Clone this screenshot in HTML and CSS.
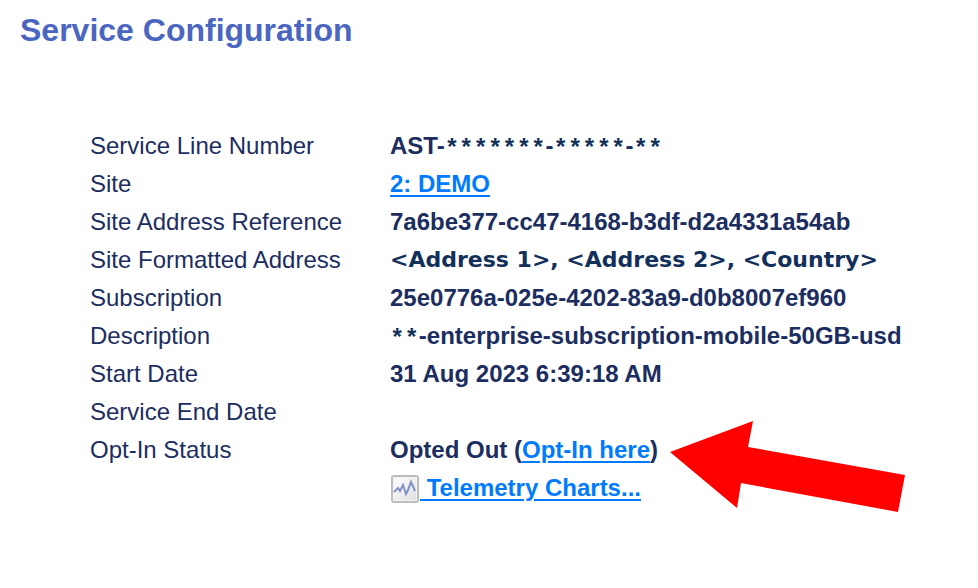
FILE: index.html
```html
<!DOCTYPE html>
<html lang="en">
  <head>
    <meta charset="utf-8" />
    <meta name="viewport" content="width=device-width, initial-scale=1" />
    <link rel="stylesheet" href="styles.css">
    <title>Service Configuration</title>
  </head>
  <body>
    <main class="page">
      <h1 class="page-title">Service Configuration</h1>
      <dl class="details">
        <dt>Service Line Number</dt>
        <dd>AST-<span class="masked">*******</span>-<span class="masked">*****</span>-<span class="masked">**</span></dd>
        <dt>Site</dt>
        <dd><a href="#">2: DEMO</a></dd>
        <dt>Site Address Reference</dt>
        <dd>7a6be377-cc47-4168-b3df-d2a4331a54ab</dd>
        <dt>Site Formatted Address</dt>
        <dd class="address">&lt;Address 1&gt;, &lt;Address 2&gt;, &lt;Country&gt;</dd>
        <dt>Subscription</dt>
        <dd>25e0776a-025e-4202-83a9-d0b8007ef960</dd>
        <dt>Description</dt>
        <dd><span class="masked">**</span>-enterprise-subscription-mobile-50GB-usd</dd>
        <dt>Start Date</dt>
        <dd>31 Aug 2023 6:39:18 AM</dd>
        <dt>Service End Date</dt>
        <dd></dd>
        <dt>Opt-In Status</dt>
        <dd class="status">
          Opted Out (<a href="#">Opt-In here</a>)
          <svg class="arrow" width="238" height="94" viewBox="0 0 238 94" aria-hidden="true">
            <path fill="#ff0000" d="M1 32 84 1 79 27 236 55 229 92 72 63 68 88z" />
          </svg>
        </dd>
        <dd class="telemetry">
          <a href="#"><svg class="chart-icon" width="30" height="30" viewBox="0 0 30 30" aria-hidden="true">
              <defs>
                <linearGradient id="panel" x2="1" y2="1">
                  <stop offset="0" stop-color="#ffffff" />
                  <stop offset="1" stop-color="#dedede" />
                </linearGradient>
              </defs>
              <rect x="2" y="2" width="26" height="26" rx="2" fill="url(#panel)" stroke="#bdbdbd" stroke-width="2" />
              <rect x="3.5" y="3.5" width="23" height="23" fill="none" stroke="#f5f5f5" />
              <path d="M4 18 8 14 10 17 13 11 16 20 18 16 21 8 25 17" fill="none" stroke="#8290c9" stroke-width="2" />
            </svg>&nbsp;Telemetry Charts...</a>
        </dd>
      </dl>
    </main>
  </body>
</html>
```

FILE: styles.css
```css
:root {
  --title-color: #4b66c0;
  --text-color: #1c2d60;
  --masked-color: #12305a;
  --link-color: #007bff;
  --row-height: 38px;
}

* {
  box-sizing: border-box;
}

body {
  background-color: #fff;
  color: var(--text-color);
  font-family: "Liberation Sans", Arial, Helvetica, sans-serif;
  font-size: 24px;
  line-height: var(--row-height);
  margin: 0;
}

.page {
  padding: 12px 20px;
}

.page-title {
  color: var(--title-color);
  font-size: 32px;
  line-height: 36px;
  margin: 0;
}

.details {
  display: grid;
  grid-template-columns: 300px 1fr;
  grid-auto-rows: var(--row-height);
  margin: 79px 0 0;
  padding-left: 70px;
  white-space: nowrap;

  & dt {
    grid-column: 1;
  }

  & dd {
    font-weight: bold;
    grid-column: 2;
    margin: 0;
  }

  & a {
    color: var(--link-color);
    text-decoration-thickness: 2px;
    text-underline-offset: 3px;
  }
}

.masked {
  color: var(--masked-color);
  font-family: "Liberation Mono", "Courier New", monospace;
  line-height: 1;
  vertical-align: -2px;
}

.details .address {
  color: var(--masked-color);
  font-family: "DejaVu Sans", Verdana, sans-serif;
  font-size: 22px;
}

.status {
  position: relative;
}

/* Callout pointing at the opt-in link */
.arrow {
  left: 279px;
  pointer-events: none;
  position: absolute;
  top: -11px;
}

.chart-icon {
  vertical-align: -8px;
}
```
